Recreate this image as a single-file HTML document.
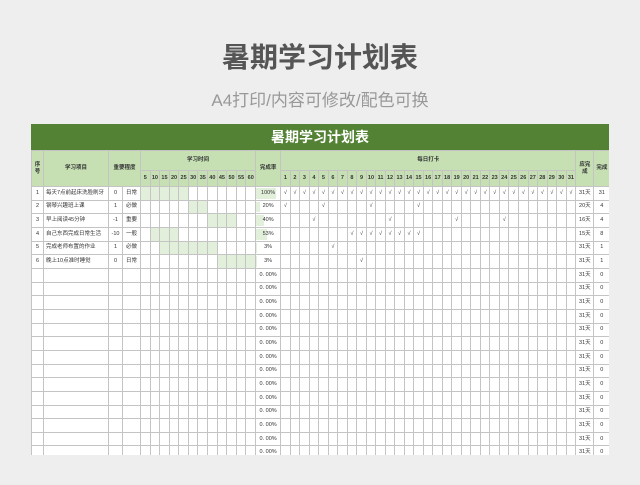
<!DOCTYPE html>
<html><head><meta charset="utf-8"><style>
body{margin:0;width:640px;height:485px;background:#eee;overflow:hidden;position:relative;font-family:"Liberation Sans","Noto Sans CJK SC",sans-serif;}
.t1{position:absolute;top:36px;left:0;width:640px;text-align:center;font-size:28px;font-weight:bold;color:#555;}
.t2{position:absolute;top:86px;left:0;width:640px;text-align:center;font-size:17px;color:#999;}
.bar{position:absolute;left:31px;top:124px;width:578px;height:26px;background:#548235;color:#fff;font-weight:bold;font-size:14px;text-align:center;line-height:26px;}
.wrap{position:absolute;left:31px;top:150px;width:578px;height:305px;overflow:hidden;background:#fff;}
table{border-collapse:collapse;table-layout:fixed;width:578px;font-size:5.5px;line-height:7px;color:#333;}
td{border:1px solid #c4c4c4;padding:0;text-align:center;overflow:hidden;white-space:nowrap;height:12.67px;}
.h td,td.h{background:#c6e0b4;font-weight:bold;}
td.g{background:#e2efda;}
td.l{text-align:left;padding-left:2px;}
.rate{position:relative;}
.rate i{position:absolute;left:0;top:1px;bottom:1px;background:#e2efda;}
.rate span{position:relative;}
</style></head><body>
<div class="t1">暑期学习计划表</div>
<div class="t2">A4打印/内容可修改/配色可换</div>
<div class="bar">暑期学习计划表</div>
<div class="wrap"><table id="tb"></table></div>
<script>
var w=[12,65,14,18];for(var i=0;i<12;i++)w.push(115/12);w.push(25);for(i=0;i<31;i++)w.push(295/31);w.push(18,16);
var h='<colgroup>'+w.map(function(x){return '<col style="width:'+x+'px">'}).join('')+'</colgroup>';
h+='<tr class="h"><td rowspan="2">序<br>号</td><td rowspan="2">学习项目</td><td colspan="2" rowspan="2">重要程度</td><td colspan="12" style="height:19px">学习时间</td><td rowspan="2">完成率</td><td colspan="31">每日打卡</td><td rowspan="2">应完<br>成</td><td rowspan="2">完成</td></tr><tr class="h">';
for(i=1;i<=12;i++)h+='<td style="height:15px">'+i*5+'</td>';
for(i=1;i<=31;i++)h+='<td>'+i+'</td>';h+='</tr>';
var rows=[
['每天7点前起床洗脸刷牙','0','日常',[0,4],100,'100%',[1,2,3,4,5,6,7,8,9,10,11,12,13,14,15,16,17,18,19,20,21,22,23,24,25,26,27,28,29,30,31],'31天','31'],
['钢琴兴趣班上课','1','必做',[5,6],20,'20%',[1,5,10,15],'20天','4'],
['早上阅读45分钟','-1','重要',[7,9],40,'40%',[4,12,19,24],'16天','4'],
['自己东西完成日常生活','-10','一般',[1,3],53,'53%',[8,9,10,11,12,13,14,15],'15天','8'],
['完成老师布置的作业','1','必做',[2,7],3,'3%',[6],'31天','1'],
['晚上10点准时睡觉','0','日常',[8,11],3,'3%',[9],'31天','1']];
for(var r=0;r<22;r++){var d=rows[r];h+='<tr>';
if(d){h+='<td>'+(r+1)+'</td><td class="l">'+d[0]+'</td><td>'+d[1]+'</td><td>'+d[2]+'</td>';
for(i=0;i<12;i++)h+='<td'+(i>=d[3][0]&&i<=d[3][1]?' class="g"':'')+'></td>';
h+='<td class="rate"><i style="width:'+d[4]*0.2+'px"></i><span>'+d[5]+'</span></td>';
for(i=1;i<=31;i++)h+='<td>'+(d[6].indexOf(i)>=0?'√':'')+'</td>';
h+='<td>'+d[7]+'</td><td>'+d[8]+'</td>';}
else{h+='<td></td><td></td><td></td><td></td>';for(i=0;i<12;i++)h+='<td></td>';h+='<td>0. 00%</td>';for(i=0;i<31;i++)h+='<td></td>';h+='<td>31天</td><td>0</td>';}
h+='</tr>';}
document.getElementById('tb').innerHTML=h;
</script>
</body></html>
